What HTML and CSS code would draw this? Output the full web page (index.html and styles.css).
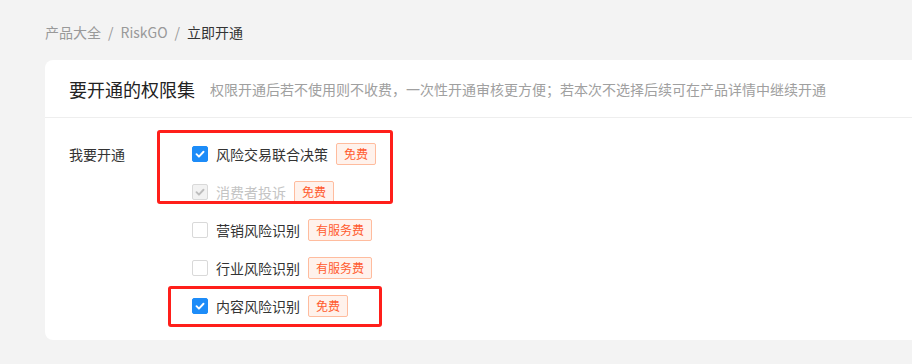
FILE: index.html
```html
<!DOCTYPE html>
<html lang="zh-CN">
<head>
<meta charset="utf-8">
<title>立即开通</title>
<link rel="stylesheet" href="styles.css">
</head>
<body>
<div class="page">
  <nav class="crumbs">
    <span class="crumb">产品大全</span><span class="sep">/</span><span class="crumb">RiskGO</span><span class="sep">/</span><span class="crumb current">立即开通</span>
  </nav>
  <section class="card">
    <header class="card-head">
      <h2 class="title">要开通的权限集</h2>
      <span class="hint">权限开通后若不使用则不收费，一次性开通审核更方便；若本次不选择后续可在产品详情中继续开通</span>
    </header>
    <div class="card-body">
      <div class="field-label">我要开通</div>
      <div class="options">
        <div class="opt"><span class="cb checked"><svg viewBox="0 0 16 16"><path d="M4 8.2l2.8 2.8 5.2-5.6" /></svg></span><span class="name">风险交易联合决策</span><span class="tag">免费</span></div>
        <div class="opt disabled"><span class="cb checked dis"><svg viewBox="0 0 16 16"><path d="M4 8.2l2.8 2.8 5.2-5.6" /></svg></span><span class="name">消费者投诉</span><span class="tag">免费</span></div>
        <div class="opt"><span class="cb"></span><span class="name">营销风险识别</span><span class="tag">有服务费</span></div>
        <div class="opt"><span class="cb"></span><span class="name">行业风险识别</span><span class="tag">有服务费</span></div>
        <div class="opt"><span class="cb checked"><svg viewBox="0 0 16 16"><path d="M4 8.2l2.8 2.8 5.2-5.6" /></svg></span><span class="name">内容风险识别</span><span class="tag">免费</span></div>
      </div>
    </div>
  </section>
</div>
<div class="mark mark-a"></div>
<div class="mark mark-b"></div>
</body>
</html>
```
FILE: styles.css
```css
html, body {
  margin: 0;
  padding: 0;
}
body {
  background: #f3f3f3;
  font-family: "Noto Sans CJK SC", "Noto Sans", sans-serif;
  color: #333;
  width: 912px;
  height: 364px;
  overflow: hidden;
  position: relative;
}
.page {
  padding: 20px 0 0 45px;
}
.crumbs {
  display: flex;
  align-items: center;
  height: 24px;
  font-size: 14px;
  color: #999;
}
.sep {
  margin: 0 7px;
  color: #999;
}
.crumb.current {
  color: #333;
}
.card {
  margin-top: 16px;
  width: 900px;
  background: #fff;
  border-radius: 8px;
}
.card-head {
  display: flex;
  align-items: center;
  height: 57px;
  padding-left: 24px;
  border-bottom: 1px solid #eeeeee;
}
.title {
  margin: 0;
  font-size: 18px;
  font-weight: 400;
  color: #222;
}
.hint {
  margin-left: 15px;
  font-size: 14px;
  color: #a0a0a0;
  padding-top: 1px;
}
.card-body {
  display: flex;
  padding: 17px 0 15px 24px;
}
.field-label {
  width: 123px;
  height: 38px;
  line-height: 38px;
  font-size: 14px;
  color: #333;
}
.options {
  display: flex;
  flex-direction: column;
}
.opt {
  display: flex;
  align-items: center;
  height: 38px;
  font-size: 14px;
  color: #333;
}
.cb {
  box-sizing: border-box;
  width: 16px;
  height: 16px;
  border: 1px solid #d9d9d9;
  border-radius: 2px;
  background: #fff;
  margin-right: 8px;
  display: flex;
  align-items: center;
  justify-content: center;
}
.cb svg {
  width: 14px;
  height: 14px;
  fill: none;
  stroke: #fff;
  stroke-width: 2.2;
  stroke-linecap: round;
  stroke-linejoin: round;
}
.cb.checked {
  background: #1d8cf8;
  border-color: #1d8cf8;
}
.cb.checked.dis {
  background: #f2f2f2;
  border-color: #d9d9d9;
}
.cb.dis svg {
  stroke: #bdbdbd;
}
.opt.disabled .name {
  color: #c4c4c4;
}
.tag {
  box-sizing: border-box;
  margin-left: 8px;
  height: 22px;
  line-height: 20px;
  padding: 0 7px;
  font-size: 12px;
  color: #ff5b2e;
  background: #fff2ec;
  border: 1px solid #ffbc9e;
  border-radius: 2px;
}
.mark {
  position: absolute;
  box-sizing: border-box;
  border: 3px solid #ff1f1a;
  border-radius: 3px;
}
.mark-a {
  left: 157px;
  top: 130px;
  width: 236px;
  height: 74px;
}
.mark-b {
  left: 168px;
  top: 286px;
  width: 214px;
  height: 41px;
}
```
